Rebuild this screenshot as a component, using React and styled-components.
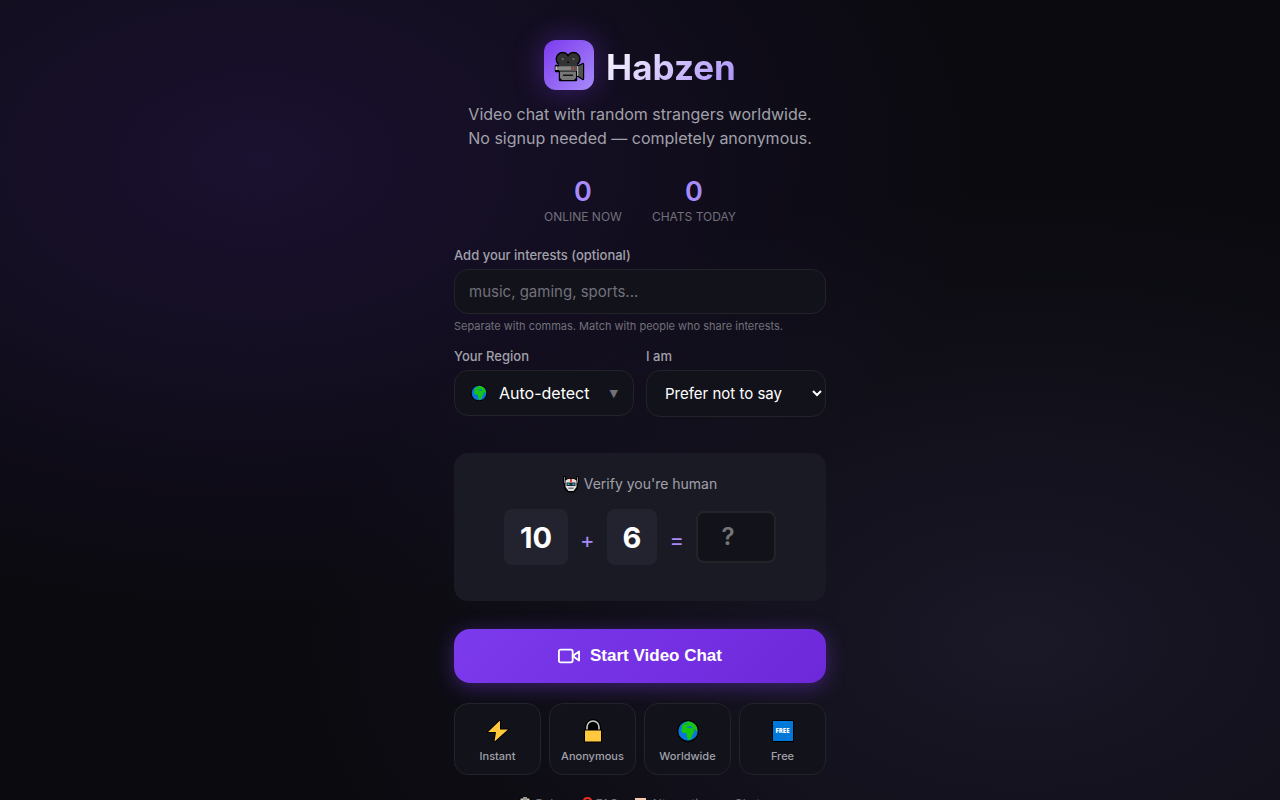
import React, { useState } from 'react';
import styled, { createGlobalStyle } from 'styled-components';

let GlobalStyle = createGlobalStyle`
  * {
    box-sizing: border-box;
    margin: 0;
    padding: 0;
  }
  html {
    background-color: #0a0a0f;
    scrollbar-width: none;
  }
  body {
    min-height: 100vh;
    color: #fff;
    font-family: 'Inter', 'Liberation Sans', sans-serif;
    background:
      radial-gradient(ellipse at 20% 20%, rgba(124, 58, 237, 0.15) 0%, transparent 50%) fixed,
      radial-gradient(ellipse at 80% 80%, rgba(167, 139, 250, 0.1) 0%, transparent 50%) fixed;
  }
`;

let Page = styled.main`
  width: 100%;
  max-width: 420px;
  margin: 0 auto;
  padding: 40px 24px;
`;

let Brand = styled.div`
  display: flex;
  align-items: center;
  justify-content: center;
  gap: 12px;
  margin-bottom: 12px;
`;

let BrandIcon = styled.div`
  display: flex;
  align-items: center;
  justify-content: center;
  width: 50px;
  height: 50px;
  border-radius: 12px;
  background: linear-gradient(135deg, #7c3aed, #a78bfa);
  box-shadow: 0 0 30px rgba(124, 58, 237, 0.4);
`;

let BrandName = styled.h1`
  padding-top: 4px;
  font-size: 35px;
  line-height: 46px;
  font-weight: 700;
  background: linear-gradient(135deg, #fff, #a78bfa);
  background-clip: text;
  color: transparent;
`;

let Tagline = styled.p`
  color: #a1a1aa;
  font-size: 16px;
  line-height: 24px;
  text-align: center;
`;

let Stats = styled.div`
  display: flex;
  justify-content: center;
  gap: 30px;
  margin-top: 25px;
`;

let Stat = styled.div`
  text-align: center;
`;

let StatValue = styled.div`
  color: #a78bfa;
  font-size: 27px;
  line-height: 34px;
  font-weight: 600;
`;

let StatLabel = styled.div`
  color: #71717a;
  font-size: 12px;
  line-height: 16px;
  text-transform: uppercase;
`;

let Field = styled.div`
  display: flex;
  flex-direction: column;
  flex: 1 1 0;
  min-width: 0;
`;

let Form = styled.form`
  display: flex;
  flex-direction: column;
  margin-top: 22px;
`;

let FieldRow = styled.div`
  display: flex;
  align-items: flex-start;
  gap: 12px;
  margin-top: 14px;
`;

let Label = styled.label`
  color: #a1a1aa;
  font-size: 13px;
  line-height: 16px;
  font-weight: 500;
  margin-bottom: 6px;
`;

let TextInput = styled.input`
  height: 45px;
  padding: 0 14px;
  border: 1px solid #23232a;
  border-radius: 14px;
  background-color: #12121a;
  color: #fff;
  font-family: inherit;
  font-size: 15px;
  outline: none;
  &::placeholder {
    color: #71717a;
  }
`;

let Hint = styled.p`
  color: #71717a;
  font-size: 11px;
  line-height: 16px;
  margin-top: 4px;
`;

let RegionButton = styled.button`
  display: flex;
  align-items: center;
  height: 46px;
  padding: 0 15px;
  border: 1px solid #23232a;
  border-radius: 14px;
  background-color: #12121a;
  color: #fff;
  font-family: inherit;
  font-size: 16px;
  cursor: pointer;
  svg {
    flex-shrink: 0;
  }
`;

let RegionName = styled.span`
  flex: 1;
  margin-left: 11px;
  text-align: left;
  white-space: nowrap;
`;

let Caret = styled.span`
  color: #71717a;
  font-family: 'DejaVu Sans', sans-serif;
  font-size: 11px;
`;

let Select = styled.select`
  height: 47px;
  padding: 0 0 0 14px;
  border: 1px solid #23232a;
  border-radius: 14px;
  background-color: #12121a;
  color: #fff;
  font-family: inherit;
  font-size: 15px;
  outline: none;
`;

let Captcha = styled.section`
  margin-top: 36px;
  padding: 20px 20px 36px;
  border-radius: 14px;
  background-color: #1a1a24;
`;

let CaptchaLabel = styled.label`
  display: flex;
  align-items: center;
  justify-content: center;
  gap: 5px;
  color: #a1a1aa;
  font-size: 14px;
  line-height: 22px;
  margin-bottom: 14px;
`;

let CaptchaRow = styled.div`
  display: flex;
  align-items: center;
  justify-content: center;
  gap: 12px;
`;

let Digit = styled.span`
  min-width: 50px;
  padding: 9px 16px 7px;
  border-radius: 8px;
  background-color: #232330;
  font-size: 29px;
  line-height: 40px;
  font-weight: 700;
  text-align: center;
`;

let Operator = styled.span`
  padding-top: 5px;
  color: #a78bfa;
  font-size: 22px;
  line-height: 32px;
`;

let Answer = styled.input`
  width: 80px;
  height: 52px;
  padding: 0 16px 2px 0;
  border: 2px solid #23232a;
  border-radius: 8px;
  background-color: #12121a;
  color: #fff;
  font-family: inherit;
  font-size: 24px;
  font-weight: 600;
  text-align: center;
  outline: none;
  &::placeholder {
    color: #757575;
  }
`;

let StartButton = styled.button`
  display: flex;
  align-items: center;
  justify-content: center;
  gap: 10px;
  height: 54px;
  margin-top: 28px;
  border: none;
  border-radius: 16px;
  background: linear-gradient(135deg, #7c3aed, #6d28d9);
  box-shadow: 0 4px 20px rgba(124, 58, 237, 0.4);
  color: #fff;
  font-family: 'Liberation Sans', Arial, sans-serif;
  font-size: 17px;
  font-weight: 700;
  cursor: pointer;
`;

let Features = styled.ul`
  display: grid;
  grid-template-columns: repeat(4, 1fr);
  gap: 8px;
  margin-top: 20px;
  list-style: none;
`;

let Feature = styled.li`
  display: flex;
  flex-direction: column;
  align-items: center;
  gap: 5px;
  padding: 15px 4px 10px;
  border: 1px solid #23232a;
  border-radius: 14px;
  background-color: #12121a;
  color: #a1a1aa;
  font-size: 11px;
  line-height: 16px;
  font-weight: 500;
`;

let FooterNav = styled.nav`
  display: flex;
  justify-content: center;
  gap: 16px;
  margin-top: 20px;
`;

let FooterLink = styled.a`
  display: flex;
  align-items: center;
  gap: 4px;
  color: #71717a;
  font-size: 12px;
  line-height: 18px;
  text-decoration: none;
`;

function CameraIcon() {
  return (
    <svg width="32" height="34" viewBox="0 -1 32 34" aria-hidden="true">
      <g fill="#000" stroke="#000" strokeWidth="2.400" strokeLinejoin="round">
        <circle cx="9.700" cy="10" r="6" />
        <circle cx="20.500" cy="10" r="6" />
        <path d="M3 17h22v5H3zM7 20h16v11H7zM24 18l6-3v15l-6-4z" />
      </g>
      <circle cx="9.700" cy="10" r="5.800" fill="#333" />
      <circle cx="20.500" cy="10" r="5.800" fill="#333" />
      <path d="M6 14h18v4H6z" fill="#333" />
      <circle cx="9.700" cy="10" r="1" fill="#777" />
      <circle cx="20.500" cy="10" r="1" fill="#777" />
      <path d="M6 17h18v5H6z" fill="#555" />
      <path d="M3 17.500h15v3.500H3z" fill="#858585" />
      <path d="M2.500 17.500H4V21H2.500z" fill="#c4c4c4" />
      <circle cx="20.300" cy="19.600" r="1" fill="#f03a22" />
      <path d="M7 22.500h16V29l-2 2H9l-2-2z" fill="#777" />
      <path d="M10 25.500h10V27H10z" fill="#151515" />
      <path d="M25 17.500l5-2.500v15l-5-3.500z" fill="#505050" />
      <path d="M24 17h1.200v10H24z" fill="#aaa" />
    </svg>
  );
}

function GlobeIcon({ size }) {
  return (
    <svg width={size} height={size} viewBox="0 0 24 24" aria-hidden="true">
      <circle cx="12" cy="12" r="11" fill="#000" />
      <circle cx="12" cy="12" r="9.7" fill="#0878d8" />
      <path d="M5.5 7.5l3-3.4 3.5-1.8 3.3.6 3.2 2 2 2.7 1 3.4-1.3 1.2-1.5-2-1.2.4 1 2-1.6 2.4-1 1.5-.2 2.2-2 2.3-1.8-.5-1-3-.4-3.2-3.8-.6-1.4-2 1-2.8z" fill="#19c60f" />
      <path d="M10.5 7.7l4-.7 2 1.2-1.2 1-3.8-.5zM9 4.7l3-.4-2.5 1.4z" fill="#0878d8" />
    </svg>
  );
}

function RobotIcon() {
  return (
    <svg width="16" height="18" viewBox="0 -1 16 18" aria-hidden="true">
      <path d="M0 0h3v2.500h10V0h3v7l-1 1v4l-4 4.500H5L1 12V8L0 7z" fill="#000" />
      <path d="M1 1h.8v6H1zM14.200 1h.8v6h-.8z" fill="#999" />
      <path d="M2.500 4.500L5 3h6l2.500 1.500V11L10.500 15h-5l-3-4z" fill="#dedede" />
      <path d="M7 3h2v3H7z" fill="#f03a22" />
      <path d="M3.500 6.500h9V10h-9z" fill="#20252c" />
      <path d="M4.500 7.500h2V9h-2zM9.500 7.500h2V9h-2z" fill="#28bde0" />
      <path d="M5.500 11.500h5V13h-5z" fill="#777" />
    </svg>
  );
}

function BoltIcon() {
  return (
    <svg width="24" height="24" viewBox="0 0 24 24" aria-hidden="true">
      <path d="M14 1.500L2 13h8L8.500 22.500 22 10.500h-8z" fill="#ffc83d" stroke="#000" strokeWidth="2" strokeLinejoin="round" paintOrder="stroke" />
    </svg>
  );
}

function LockIcon() {
  return (
    <svg width="24" height="24" viewBox="0 0 24 24" aria-hidden="true">
      <path d="M6 12V8a6 6 0 0 1 12 0v4" fill="#000" stroke="#000" strokeWidth="4" />
      <path d="M6 12V8a6 6 0 0 1 12 0v4" fill="none" stroke="#c8c8c8" strokeWidth="1.6" />
      <path d="M3 10.500h18V23.500H3z" fill="#000" />
      <path d="M4 11.500h16v11H4z" fill="#ffc83d" />
    </svg>
  );
}

let FreeBadge = styled.span`
  display: flex;
  align-items: center;
  justify-content: center;
  width: 22px;
  height: 22px;
  margin: 1px;
  border: 1px solid #000;
  background-color: #0078d7;
  color: #fff;
  font-family: 'Open Sans', sans-serif;
  font-size: 6px;
  line-height: 8px;
  font-weight: 800;
`;

function VideoIcon() {
  return (
    <svg width="22" height="22" viewBox="0 0 24 24" fill="none" stroke="#fff" strokeWidth="2" strokeLinejoin="round" aria-hidden="true">
      <rect x="1" y="5" width="15" height="14" rx="2" />
      <path d="M23 7l-7 5 7 5z" />
    </svg>
  );
}

function ClipboardIcon() {
  return (
    <svg width="12" height="14" viewBox="0 0 12 14" aria-hidden="true">
      <path d="M1 1h10v12H1z" fill="#d8c8b0" stroke="#000" />
      <path d="M4 0h4v3H4z" fill="#999" />
    </svg>
  );
}

function QuestionIcon() {
  return (
    <svg width="9" height="14" viewBox="0 0 9 14" fill="none" stroke="#e8301a" strokeWidth="2" aria-hidden="true">
      <path d="M1 4q0-3 3.500-3t3.500 3q0 2-3.500 4v2M4.500 12v2" />
    </svg>
  );
}

function ScrollIcon() {
  return (
    <svg width="12" height="14" viewBox="0 0 12 14" aria-hidden="true">
      <path d="M0 1h11v3H9v9H2V4H0z" fill="#f5c8b0" />
    </svg>
  );
}

let features = [
  { name: 'Instant', icon: <BoltIcon /> },
  { name: 'Anonymous', icon: <LockIcon /> },
  { name: 'Worldwide', icon: <GlobeIcon size={24} /> },
  { name: 'Free', icon: <FreeBadge aria-hidden="true">FREE</FreeBadge> },
];

let links = [
  { name: 'Rules', href: '#rules', icon: <ClipboardIcon /> },
  { name: 'FAQ', href: '#faq', icon: <QuestionIcon /> },
  { name: 'Alternatives', href: '#alternatives', icon: <ScrollIcon /> },
  { name: 'Chat', href: '#chat' },
];

function App() {
  let [interests, setInterests] = useState('');
  let [gender, setGender] = useState('none');
  let [answer, setAnswer] = useState('');

  function handleSubmit(e) {
    e.preventDefault();
  }

  return (
    <>
      <GlobalStyle />
      <Page>
        <header>
          <Brand>
            <BrandIcon><CameraIcon /></BrandIcon>
            <BrandName>Habzen</BrandName>
          </Brand>
          <Tagline>
            Video chat with random strangers worldwide.<br />
            No signup needed — completely anonymous.
          </Tagline>
        </header>

        <Stats>
          <Stat>
            <StatValue>0</StatValue>
            <StatLabel>Online now</StatLabel>
          </Stat>
          <Stat>
            <StatValue>0</StatValue>
            <StatLabel>Chats today</StatLabel>
          </Stat>
        </Stats>

        <Form onSubmit={handleSubmit}>
          <Field>
            <Label htmlFor="interests">Add your interests (optional)</Label>
            <TextInput
              id="interests"
              type="text"
              placeholder="music, gaming, sports..."
              value={interests}
              onChange={e => setInterests(e.target.value)}
            />
            <Hint>Separate with commas. Match with people who share interests.</Hint>
          </Field>

          <FieldRow>
            <Field>
              <Label htmlFor="region">Your Region</Label>
              <RegionButton id="region" type="button">
                <GlobeIcon size={18} />
                <RegionName>Auto-detect</RegionName>
                <Caret>▼</Caret>
              </RegionButton>
            </Field>
            <Field>
              <Label htmlFor="gender">I am</Label>
              <Select id="gender" value={gender} onChange={e => setGender(e.target.value)}>
                <option value="none">Prefer not to say</option>
                <option value="male">Male</option>
                <option value="female">Female</option>
              </Select>
            </Field>
          </FieldRow>

          <Captcha>
            <CaptchaLabel htmlFor="answer"><RobotIcon />Verify you're human</CaptchaLabel>
            <CaptchaRow>
              <Digit>10</Digit>
              <Operator>+</Operator>
              <Digit>6</Digit>
              <Operator>=</Operator>
              <Answer
                id="answer"
                type="text"
                inputMode="numeric"
                placeholder="?"
                value={answer}
                onChange={e => setAnswer(e.target.value)}
              />
            </CaptchaRow>
          </Captcha>

          <StartButton type="submit"><VideoIcon />Start Video Chat</StartButton>
        </Form>

        <Features>
          {features.map(({ name, icon }) => (
            <Feature key={name}>{icon}{name}</Feature>
          ))}
        </Features>

        <FooterNav>
          {links.map(({ name, href, icon }) => (
            <FooterLink key={name} href={href}>{icon}{name}</FooterLink>
          ))}
        </FooterNav>
      </Page>
    </>
  );
}

export default App;
